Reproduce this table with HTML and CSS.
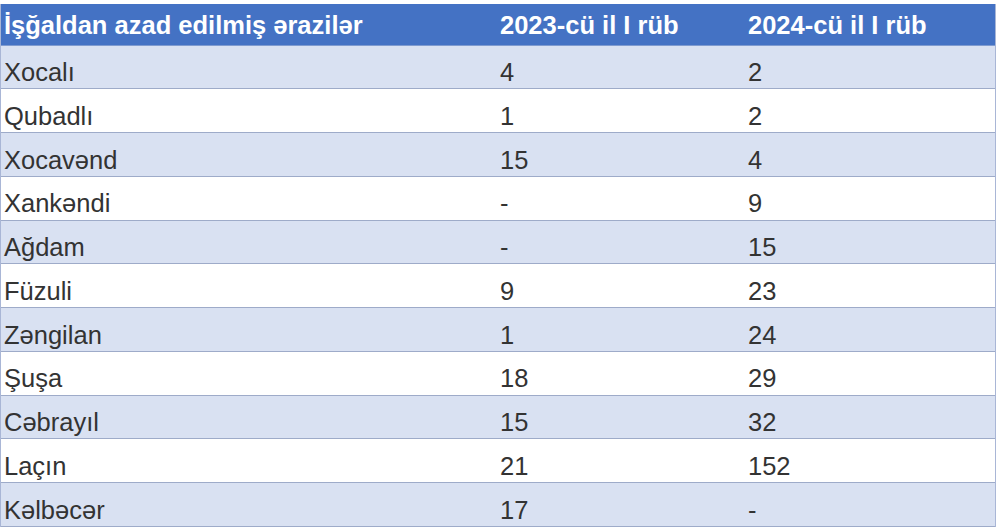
FILE: index.html
```html
<!DOCTYPE html>
<html lang="az">
<head>
<meta charset="utf-8">
<title>İşğaldan azad edilmiş ərazilər</title>
<link rel="stylesheet" href="styles.css">
</head>
<body>
<div class="table">
  <div class="row head">
    <div class="cell">İşğaldan azad edilmiş ərazilər</div>
    <div class="cell">2023-cü il I rüb</div>
    <div class="cell">2024-cü il I rüb</div>
  </div>
  <div class="row alt"><div class="cell">Xocalı</div><div class="cell">4</div><div class="cell">2</div></div>
  <div class="row"><div class="cell">Qubadlı</div><div class="cell">1</div><div class="cell">2</div></div>
  <div class="row alt"><div class="cell">Xocavənd</div><div class="cell">15</div><div class="cell">4</div></div>
  <div class="row"><div class="cell">Xankəndi</div><div class="cell">-</div><div class="cell">9</div></div>
  <div class="row alt"><div class="cell">Ağdam</div><div class="cell">-</div><div class="cell">15</div></div>
  <div class="row"><div class="cell">Füzuli</div><div class="cell">9</div><div class="cell">23</div></div>
  <div class="row alt"><div class="cell">Zəngilan</div><div class="cell">1</div><div class="cell">24</div></div>
  <div class="row"><div class="cell">Şuşa</div><div class="cell">18</div><div class="cell">29</div></div>
  <div class="row alt"><div class="cell">Cəbrayıl</div><div class="cell">15</div><div class="cell">32</div></div>
  <div class="row"><div class="cell">Laçın</div><div class="cell">21</div><div class="cell">152</div></div>
  <div class="row alt"><div class="cell">Kəlbəcər</div><div class="cell">17</div><div class="cell">-</div></div>
</div>
</body>
</html>
```

FILE: styles.css
```css
html, body {
  margin: 0;
  padding: 0;
  background: #ffffff;
}

body {
  padding-top: 4px;
  font-family: "Liberation Sans", Arial, sans-serif;
  font-size: 25.5px;
  color: #333333;
}

.table {
  width: 996px;
  box-sizing: border-box;
  border-left: 1px solid #a9b6d6;
  border-right: 1px solid #a9b6d6;
}

.row {
  display: grid;
  grid-template-columns: 495px 248px 1fr;
  box-sizing: border-box;
  height: 43.75px;
  border-bottom: 1px solid #9eabc9;
  background: #ffffff;
}

.row.alt {
  background: #d9e1f2;
}

.row.head {
  height: 41.5px;
  background: #4472c4;
  color: #ffffff;
  font-weight: bold;
  border-bottom: 1px solid #7f9bd0;
}

.cell {
  padding: 12.5px 0 0 4px;
  line-height: 29px;
  white-space: nowrap;
}

.row .cell:first-child {
  padding-left: 3px;
}

.row.head .cell {
  padding-top: 6.5px;
}
```
